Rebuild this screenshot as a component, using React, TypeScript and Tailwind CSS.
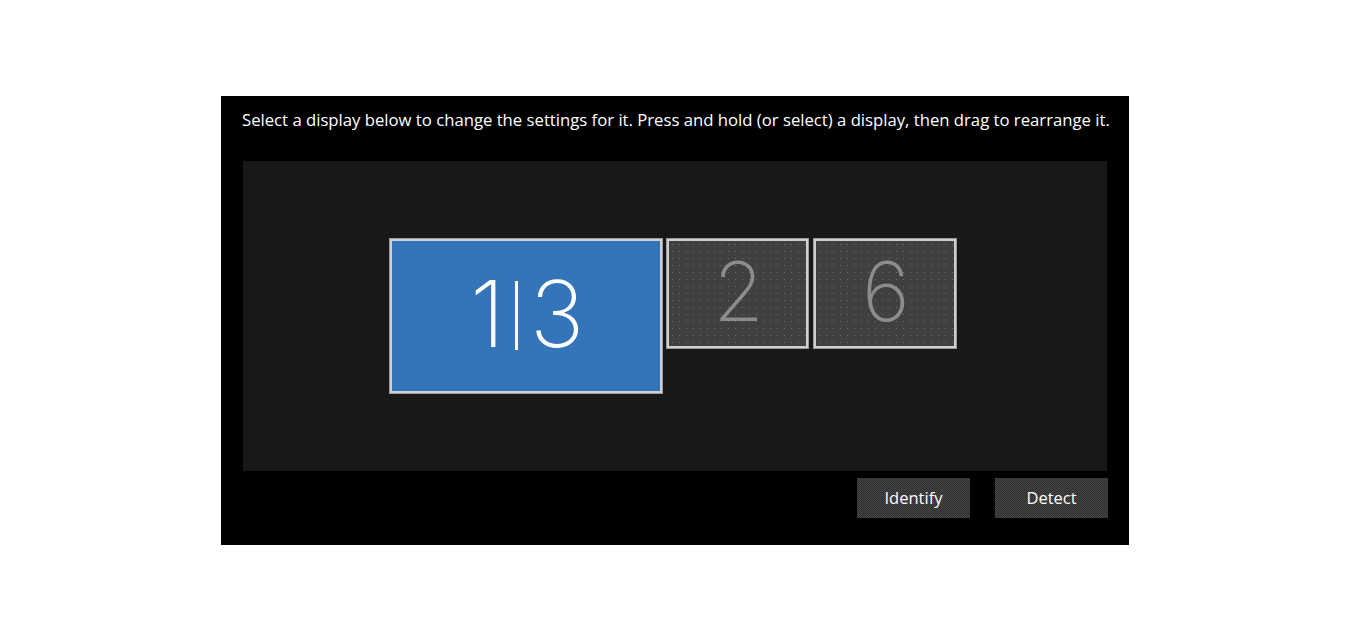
const sans = "font-['Segoe_UI','Open_Sans','Liberation_Sans',sans-serif]";

function Monitor({ primary, className, children }: { primary?: boolean; className: string; children: React.ReactNode }) {
  return (
    <div className={`border border-[#9a9a9a] ${className}`}>
      <div
        className={`h-full w-full border-2 border-[#cfcfcf] flex items-center justify-center ${
          primary
            ? 'bg-[#3474b8] text-white text-[92px]'
            : 'bg-[#404040] bg-[radial-gradient(#6e6e6e_0.6px,transparent_0.8px)] bg-[length:7px_7px] text-[#8c8c8c] text-[82px]'
        }`}
      >
        <span className="font-['Inter',sans-serif] font-extralight leading-none tracking-tight -mt-1 flex items-center">
          {children}
        </span>
      </div>
    </div>
  );
}

export default function App() {
  return (
    <div className={`w-[1350px] h-[641px] bg-white pt-[96px] pl-[221px] ${sans}`}>
      <div className="w-[908px] h-[449px] bg-black pl-[22px] pr-[22px] pt-[11px]">
        <p className="text-white text-[16.7px] leading-[26px] whitespace-nowrap -ml-px">
          Select a display below to change the settings for it. Press and hold (or select) a display, then drag to rearrange it.
        </p>

        {/* display arrangement area */}
        <div className="mt-[28px] h-[310px] bg-[#181818] flex items-center justify-center">
          <div className="flex items-start gap-[3px] -ml-[4px]">
            <Monitor primary className="w-[274px] h-[156px]">
              <span>1</span>
              <span className="inline-block w-[3px] h-[69px] bg-white mx-[12px] mt-[2px]" />
              <span>3</span>
            </Monitor>
            <Monitor className="w-[143px] h-[111px]">2</Monitor>
            <Monitor className="w-[144px] h-[111px] ml-px">6</Monitor>
          </div>
        </div>

        <div className="mt-[7px] flex justify-end gap-[25px] -mr-px">
          <button className="w-[113px] h-[40px] bg-[repeating-conic-gradient(#2e2e2e_0_25%,#464646_0_50%)] bg-[length:2px_2px] text-white text-[16.5px]">
            Identify
          </button>
          <button className="w-[113px] h-[40px] bg-[repeating-conic-gradient(#2e2e2e_0_25%,#464646_0_50%)] bg-[length:2px_2px] text-white text-[16.5px]">
            Detect
          </button>
        </div>
      </div>
    </div>
  );
}
